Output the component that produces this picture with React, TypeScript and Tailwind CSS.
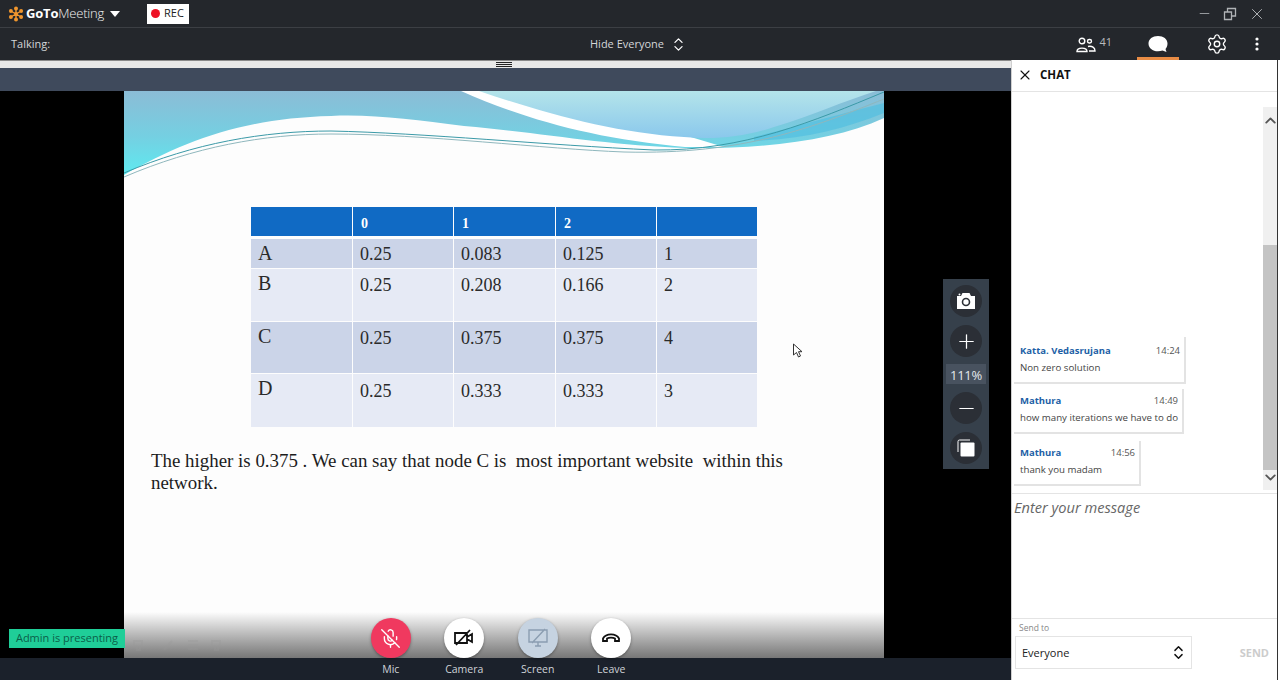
import { ChevronDown, ChevronUp, ChevronsUpDown, MicOff, Minus, Plus, Settings, X } from 'lucide-react'

const ui = { fontFamily: '"Open Sans", "Noto Sans", sans-serif' }

const tableRows = [
  { label: 'A', cells: ['0.25', '0.083', '0.125', '1'], height: 'h-[29px]', tone: 'bg-[#cbd4e8]', pad: 'pt-[6px]' },
  { label: 'B', cells: ['0.25', '0.208', '0.166', '2'], height: 'h-[52px]', tone: 'bg-[#e6eaf5]', pad: 'pt-[7px]' },
  { label: 'C', cells: ['0.25', '0.375', '0.375', '4'], height: 'h-[51px]', tone: 'bg-[#cbd4e8]', pad: 'pt-[7px]' },
  { label: 'D', cells: ['0.25', '0.333', '0.333', '3'], height: 'h-[53px]', tone: 'bg-[#e6eaf5]', pad: 'pt-[8px]' },
]

const messages = [
  { name: 'Katta. Vedasrujana', time: '14:24', body: 'Non zero solution', box: 'w-[172px] h-[47px] mb-[5px]', pad: 'pt-[6px]' },
  { name: 'Mathura', time: '14:49', body: 'how many iterations we have to do', box: 'w-[170px] h-[45px] mb-[7px]', pad: 'pt-[4px]' },
  { name: 'Mathura', time: '14:56', body: 'thank you madam', box: 'w-[127px] h-[45px]', pad: 'pt-[4px]' },
]

function Logo() {
  return (
    <svg width="16" height="16" viewBox="0 0 16 16" fill="#f0962e">
      <circle cx="8" cy="8" r="2" />
      <g stroke="#f0962e" strokeWidth="1.4">
        <path d="M8 8V2M8 8v6M8 8 2.8 5M8 8l5.2-3M8 8l-5.2 3M8 8l5.2 3" />
      </g>
      <circle cx="8" cy="2.4" r="2" />
      <circle cx="8" cy="13.6" r="2" />
      <circle cx="2.9" cy="5" r="2" />
      <circle cx="13.1" cy="5" r="2" />
      <circle cx="2.9" cy="11" r="2" />
      <circle cx="13.1" cy="11" r="2" />
    </svg>
  )
}

function SlideWave() {
  return (
    <svg width="760" height="90" viewBox="0 0 760 90" className="block">
      <defs>
        <linearGradient id="teal" x1="0" y1="0" x2="0" y2="1">
          <stop offset="0" stopColor="#8bbcd6" />
          <stop offset="0.55" stopColor="#74d0e2" />
          <stop offset="1" stopColor="#5eeaf0" />
        </linearGradient>
        <linearGradient id="sky" x1="0" y1="0" x2="0" y2="1">
          <stop offset="0" stopColor="#b4e4ea" />
          <stop offset="1" stopColor="#8ac8ec" />
        </linearGradient>
      </defs>
      <path
        d="M0 0H760V27C710 50 640 58 561 57C480 54 420 42 340 35C290 29 250 23 207 25C120 27 60 50 0 84Z"
        fill="url(#teal)"
      />
      <path d="M337 0C400 28 470 48 561 56H600L480 20L360 0Z" fill="#ffffff" />
      <path d="M355 0C420 22 490 42 560 46C590 49 620 46 650 36C690 24 720 10 752 0Z" fill="url(#sky)" />
      <path d="M630 46C670 36 720 22 760 12V22C720 38 680 48 630 50Z" fill="#4fbfe0" opacity="0.65" />
      <path d="M0 82C70 52 140 40 207 40C300 42 420 54 530 59C620 60 690 30 760 1" fill="none" stroke="#3b9aa8" strokeWidth="1" />
      <path d="M0 86C70 56 140 43 207 43C300 43 420 58 500 61C620 64 690 36 760 8" fill="none" stroke="#8fb7bd" strokeWidth="1" />
    </svg>
  )
}

function Slide() {
  return (
    <div className="relative w-[760px] h-full bg-[#fdfdfd]" style={{ fontFamily: '"Liberation Serif", serif' }}>
      <SlideWave />
      <div className="ml-[127px] mt-[26px] w-[506px] text-[#2a2a2a]">
        <div className="grid grid-cols-[101px_100px_101px_100px_100px] gap-x-[1px] mb-[3px] h-[29px] text-white font-bold text-[14px] leading-[18px]">
          {['', '0', '1', '2', ''].map((head, index) => (
            <div key={index} className="bg-[#106ac4] pl-[8px] pt-[8px]">
              {head}
            </div>
          ))}
        </div>
        {tableRows.map((row) => (
          <div
            key={row.label}
            className={`grid grid-cols-[101px_100px_101px_100px_100px] gap-x-[1px] mb-[1px] ${row.height}`}
          >
            <div className={`${row.tone} pl-[7px] pt-[4px] text-[20px] leading-[20px]`}>{row.label}</div>
            {row.cells.map((cell, index) => (
              <div key={index} className={`${row.tone} ${row.pad} pl-[7px] text-[18px] leading-[18px]`}>
                {cell}
              </div>
            ))}
          </div>
        ))}
      </div>
      <p className="ml-[27px] mt-[23px] w-[650px] text-[18.9px] leading-[22px] text-[#1c1c1c] whitespace-pre-wrap">
        {'The higher is 0.375 . We can say that node C is  most important website  within this\nnetwork.'}
      </p>
      <div className="absolute inset-x-0 bottom-0 h-[46px] bg-gradient-to-b from-[#fdfdfd] to-[#777777]" />
      <svg width="90" height="14" viewBox="0 0 90 14" className="absolute left-[8px] bottom-[6px] opacity-30" fill="none" stroke="#999" strokeWidth="2">
        <path d="M2 3h8v5H8v4H5V8H2zM32 12l8-9M56 3h10M56 7h10M56 11h10M80 3h8v5h-2v4h-3V8h-3z" />
      </svg>
    </div>
  )
}

function ZoomButton({ children }: { children: React.ReactNode }) {
  return <div className="w-[32px] h-[32px] rounded-full bg-[#2b2f36] flex items-center justify-center">{children}</div>
}

function ZoomBar() {
  return (
    <div className="absolute left-[943px] top-[219px] w-[46px] h-[190px] bg-[#36404b] flex flex-col items-center pt-[6px]">
      <ZoomButton>
        <svg width="18" height="16" viewBox="0 0 18 16">
          <path d="M0 3h4l1.500-3h7L14 3h4v13H0z" fill="#ffffff" />
          <circle cx="9" cy="9" r="3.500" fill="#ffffff" stroke="#2b2f36" strokeWidth="1.600" />
          <circle cx="2.500" cy="1.500" r="1" fill="#ffffff" />
        </svg>
      </ZoomButton>
      <div className="mt-[8px]">
        <ZoomButton>
          <Plus size={23} color="#ffffff" strokeWidth={1.3} />
        </ZoomButton>
      </div>
      <div className="mt-[7px] w-[40px] h-[20px] bg-[#48525f] text-[13px] leading-[22px] text-center tracking-[-0.3px] text-[#e4e8ec]" style={ui}>
        111%
      </div>
      <div className="mt-[8px]">
        <ZoomButton>
          <Minus size={23} color="#ffffff" strokeWidth={1.2} />
        </ZoomButton>
      </div>
      <div className="mt-[8px]">
        <ZoomButton>
          <svg width="20" height="20" viewBox="0 0 20 20">
            <path d="M2 14V3.500A1.500 1.500 0 0 1 3.500 2H14" fill="none" stroke="#fff" strokeWidth="1" />
            <rect x="4.500" y="4.500" width="14" height="14" rx="1" fill="#fff" />
          </svg>
        </ZoomButton>
      </div>
    </div>
  )
}

function CallButton({ label, tone, children }: { label: string; tone: string; children: React.ReactNode }) {
  return (
    <div className="w-[73.5px] flex flex-col items-center">
      <div className={`w-[40px] h-[40px] rounded-full flex items-center justify-center shadow-[0_1px_3px_rgba(0,0,0,0.35)] ${tone}`}>
        {children}
      </div>
      <div className="h-[22px] text-[10.5px] leading-[22px] text-[#cfd3d8]" style={ui}>
        {label}
      </div>
    </div>
  )
}

function CallControls() {
  return (
    <div className="absolute left-[354px] bottom-0 flex">
      <CallButton label="Mic" tone="bg-[#f0395f]">
        <MicOff size={21} color="#ffffff" strokeWidth={1.6} />
      </CallButton>
      <CallButton label="Camera" tone="bg-white">
        <svg width="22" height="18" viewBox="0 0 22 18" fill="none" stroke="#111" strokeWidth="1.8">
          <path d="M2 4h12v10H2zM14 8l5-3v8l-5-3M3 16 17 1" />
        </svg>
      </CallButton>
      <CallButton label="Screen" tone="bg-[#c6d3e1]">
        <svg width="22" height="20" viewBox="0 0 22 20" fill="none" stroke="#8b9db1" strokeWidth="1.4">
          <path d="M2 2h18v12H2zM8 18h6M11 14v4M5 15 18 1" />
        </svg>
      </CallButton>
      <CallButton label="Leave" tone="bg-white">
        <svg width="20" height="12" viewBox="0 0 20 12" fill="none" stroke="#111" strokeWidth="1.8">
          <path d="M2 9V6.500C5 1 15 1 18 6.500V9h-4V6.500C12 5.300 8 5.300 6 6.500V9Z" />
        </svg>
      </CallButton>
    </div>
  )
}

function ChatPanel() {
  return (
    <aside className="w-[267px] h-[620px] bg-white border-l border-[#d0d0d0] border-r border-r-[#333333] flex flex-col" style={ui}>
      <div className="h-[32px] flex items-center border-b border-[#e4e4e4] pl-[5px] pb-[2px] shrink-0">
        <X size={16} color="#111111" strokeWidth={1.6} />
        <span className="ml-[7px] text-[11.5px] font-bold text-[#111111]">CHAT</span>
      </div>
      <div className="h-[402px] relative flex flex-col justify-end pb-[7px] pl-[2px] shrink-0 border-b border-[#e4e4e4]">
        {messages.map((message, index) => (
          <div
            key={index}
            className={`${message.box} ${message.pad} bg-white border-r-2 border-b-2 border-[#e3e3e3] pl-[6px] pr-[4px]`}
          >
            <div className="flex justify-between items-center leading-[16px]">
              <span className="text-[9.5px] font-bold text-[#1d5fa6]">{message.name}</span>
              <span className="text-[9.5px] text-[#555555]">{message.time}</span>
            </div>
            <div className="mt-[1px] text-[9.7px] leading-[16px] whitespace-nowrap text-[#444444]">{message.body}</div>
          </div>
        ))}
        <div className="absolute right-0 top-[15px] bottom-[3px] w-[14px] pt-[5px] pb-[4px] bg-[#f0f0f0] flex flex-col justify-between items-center">
          <ChevronUp size={17} color="#555555" strokeWidth={2.6} />
          <div className="absolute top-[138px] left-0 right-0 h-[225px] bg-[#c4c4c4]" />
          <ChevronDown size={17} color="#555555" strokeWidth={2.6} className="relative" />
        </div>
      </div>
      <div className="h-[125px] shrink-0 border-b border-[#e4e4e4] pl-[2px] pt-[3px] text-[14.6px] italic text-[#666666]">Enter your message</div>
      <div className="relative flex-1 pl-[7px] pt-[3px]">
        <div className="text-[8.5px] leading-[12px] text-[#888888]">Send to</div>
        <div className="mt-[2px] ml-[-4px] w-[177px] h-[33px] border border-[#e4e4e4] flex items-center justify-between pl-[6px] pr-[4px] text-[11px] text-[#222222]">
          <span className="mt-[1px]">Everyone</span>
          <ChevronsUpDown size={17} color="#111111" strokeWidth={2} />
        </div>
        <span className="absolute right-[8px] top-[26px] text-[11px] font-bold text-[#cccccc]">SEND</span>
      </div>
    </aside>
  )
}

export default function App() {
  return (
    <div className="w-[1280px] h-[680px] overflow-hidden bg-white flex flex-col">
      <header className="h-[28px] bg-[#24272c] border-b border-[#3c3f44] flex items-center shrink-0" style={ui}>
        <div className="ml-[8px] flex items-center">
          <Logo />
          <span className="ml-[2px] w-[81px] text-[13px] font-light text-[#f4f4f4] tracking-[-0.2px]">
            <b className="font-bold text-white">GoTo</b>Meeting
          </span>
          <svg width="10" height="6" viewBox="0 0 10 6" className="ml-[3px]" fill="#ffffff">
            <path d="M0 0h10L5 6z" />
          </svg>
        </div>
        <div className="ml-[27px] w-[42px] h-[20px] bg-white flex items-center pl-[4px] text-[11px] text-[#222222]">
          <span className="w-[9px] h-[9px] rounded-full bg-[#ee1124]" />
          <span className="ml-[4px]">REC</span>
        </div>
        <div className="ml-auto flex items-center text-[#b0b3b6]">
          <Minus size={15} strokeWidth={1.3} />
          <svg width="14" height="14" viewBox="0 0 14 14" fill="none" stroke="currentColor" strokeWidth="1.300" className="ml-[11px]">
            <path d="M1.500 5h7v7.500h-7zM4.500 5V1.500h8V9H8.500" />
          </svg>
          <X size={18} strokeWidth={1.3} className="ml-[11px] mr-[14px]" />
        </div>
      </header>

      <div className="h-[32px] bg-[#24272c] flex items-center shrink-0 text-[11px] text-[#d4d6d8]" style={ui}>
        <span className="ml-[11px] w-[579px]">Talking:</span>
        <span>Hide Everyone</span>
        <ChevronsUpDown size={17} color="#ffffff" strokeWidth={1.8} className="ml-[6px]" />
        <div className="ml-auto h-full flex items-center">
          <svg width="20" height="16" viewBox="0 0 20 16" fill="none" stroke="#ffffff" strokeWidth="1.400" className="mt-[1px]">
            <circle cx="6" cy="4" r="2.800" />
            <rect x="11.500" y="2.500" width="4" height="3.500" rx="1.700" />
            <path d="M1 14.500C1 10 11 10 11 14.500ZM12 9.500c4-.8 7 1 7 4.500h-6" />
          </svg>
          <span className="ml-[3px] mb-[4px] text-[11px] text-[#b8babd]">41</span>
          <div className="relative ml-[25px] w-[42px] h-full flex items-center justify-center">
            <svg width="20" height="17" viewBox="0 0 20 17" fill="#ffffff">
              <path d="M10 0c5.500 0 9.500 3 9.500 7.500 0 2.500-1 4.500-2 5.500l1 3-4-1.500c-1.300.5-3 .8-4.500.8C4.500 15.300.5 12 .5 7.500S4.500 0 10 0Z" />
            </svg>
            <span className="absolute inset-x-0 bottom-0 h-[3px] bg-[#e88c45]" />
          </div>
          <Settings size={22} color="#ffffff" strokeWidth={1.5} className="ml-[27px]" />
          <svg width="4" height="14" viewBox="0 0 4 14" fill="#ffffff" className="ml-[27px] mr-[21px]">
            <circle cx="2" cy="2" r="1.600" />
            <circle cx="2" cy="7" r="1.600" />
            <circle cx="2" cy="12" r="1.600" />
          </svg>
        </div>
      </div>

      <div className="flex flex-1 min-h-0">
        <main className="relative w-[1011px] flex flex-col">
          <div className="h-[8px] bg-[#e8e8e8] border-t border-[#8a8a8a] flex justify-center">
            <div className="w-[16px] mt-[1px] mr-[3px] h-[5px] border-y border-[#222222] relative">
              <div className="absolute inset-x-0 top-[1px] h-px bg-[#222222]" />
            </div>
          </div>
          <div className="h-[23px] bg-[#3f4a5c]" />
          <div className="flex-1 bg-black pl-[124px] min-h-0">
            <Slide />
          </div>
          <div className="h-[22px] bg-[#1b212b]" />
          <ZoomBar />
          <div className="absolute left-[9px] top-[569px] w-[116px] h-[19px] bg-[#1fce98] text-center text-[11px] leading-[18px] text-[#0b5f49]" style={ui}>
            Admin is presenting
          </div>
          <CallControls />
          <svg width="11" height="15" viewBox="0 0 11 15" className="absolute left-[792px] top-[283px]">
            <path d="M1.500 1v11l3-2.500L6.500 14l2-1-2-4.300h3.500Z" fill="#ffffff" stroke="#333333" strokeWidth="1" />
          </svg>
        </main>
        <ChatPanel />
      </div>
    </div>
  )
}
